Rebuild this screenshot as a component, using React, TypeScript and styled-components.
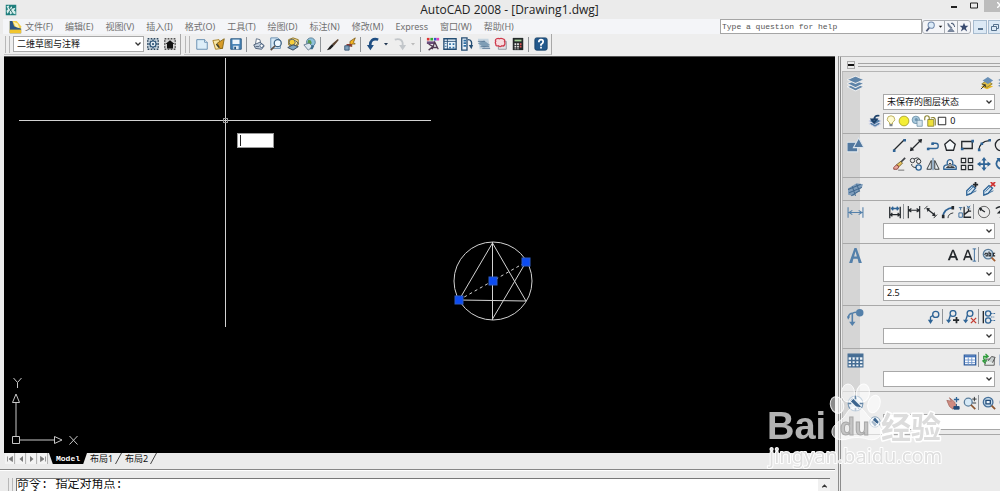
import React from 'react';
import styled, { createGlobalStyle, css } from 'styled-components';

const sans = '"Noto Sans", "Open Sans", "Noto Sans CJK SC", sans-serif';
const mono = '"Liberation Mono", "Noto Sans CJK SC", monospace';
const ink = '#24282c';
const blue = '#2f6496';
const gold = '#e8b928';

const Global = createGlobalStyle`
  *, *::before, *::after { box-sizing: border-box; }
  html, body, #root { height: 100%; }
  body { margin: 0; background: #ebebeb; color: #111; font: 9px/12px ${sans}; overflow: hidden; }
  button, input, select { font: inherit; color: inherit; margin: 0; padding: 0; border: 0; border-radius: 0; background: none; }
  svg { display: block; flex: none; }
`;

/* ---------- icons ---------- */

const glyphs: Record<string, React.ReactNode> = {
  app: <><path d="M1 1h14v14H1z" fill="#1f7f7d" /><path d="M2 3l3-1 1 4 3-3 1 3 4-1-2 4 2 1v4l-4-2-3 2-1-4-3 3-1-4 2-2z" fill="#d6efec" /><path d="M5 4l5 8M11 4l-6 7" stroke="#155" /></>,
  doc: <><path d="M2 1h8l5 6v8H2z" fill="#f3cf48" /><path d="M2 1l3 0 2 6 8 3v5H2z" fill="#2b5584" /><path d="M2 11h13v4H2z" fill="#f1c52e" /><path d="M6 2l3 6 4 1-2-5z" fill="#fff3b5" /></>,
  gear: <><path d="M0 0h16v16H0z" fill="#c9d6e0" /><path d="M1 1h14v14H1z" fill="none" stroke="#33485c" strokeWidth="2" strokeDasharray="2 2" /><path d="M8 2v12M2 8h12M4 4l8 8M12 4l-8 8" stroke="#33597b" strokeWidth="2" /><circle cx="8" cy="8" r="4" fill="#e5eef5" stroke="#33597b" strokeWidth="1.500" /><circle cx="8" cy="8" r="1.500" fill="#33597b" /></>,
  home: <><path d="M0 0h16v16H0z" fill="#d2d2d2" /><path d="M1 1h14v14H1z" fill="none" stroke="#555" strokeWidth="2" strokeDasharray="2 2" /><path d="M2 8l6-5 6 5h-2v6H4V8z" fill="#111" /></>,
  page: <><path d="M2 3h9l3 3v8H2z" fill="#dcedf8" stroke="#5c87ab" /><path d="M11 3v3h3" fill="#fff" stroke="#5c87ab" /></>,
  open: <><path d="M1 4l7-1 4 10-8 1z" fill="#f8e6a4" stroke="#a37a1b" /><path d="M6 7l8-5-2 11-3 0z" fill="#d79b28" stroke="#7f6216" /><path d="M5 8l3 4" stroke="#3a3a2a" strokeWidth="1.500" /></>,
  save: <><path d="M2 2h12v12H2z" fill="#4b86b8" stroke="#23527b" /><path d="M4 3h8v5H4z" fill="#eef6fb" /><path d="M5 10h6v4H5z" fill="#dfe9f1" /><path d="M6 11h2v3H6z" fill="#23527b" /></>,
  print: <><path d="M4 8l1-6 4 1 1 4" fill="#fff" stroke="#56687e" /><path d="M2 9l7-3 5 4-3 4-7-1z" fill="#c3d0df" stroke="#44566f" /><circle cx="11" cy="10" r="2" fill="#fff" stroke="#3f5878" /><path d="M4 11h4" stroke="#44566f" /></>,
  preview: <><path d="M2 1h8l3 3v9H2z" fill="#d6e8f5" stroke="#5c87ab" /><circle cx="10" cy="7" r="4" fill="#eef8ff" stroke="#3d6385" strokeWidth="1.5" /><path d="M7 10l-5 5" stroke="#5d5148" strokeWidth="2" /></>,
  publish: <><path d="M3 3l5-2 6 2 0 6-5 3-6-3z" fill="#f9e08a" stroke="#8a6b18" /><circle cx="7" cy="6" r="3.500" fill="#f8ce39" stroke="#4a5a6c" /><path d="M2 12l6-3 6 2-6 4z" fill="#7fa4c2" stroke="#345" /><path d="M11 4l3 3-3 3" fill="none" stroke="#345" /></>,
  globe: <><circle cx="9" cy="6" r="5" fill="#8fc1dc" stroke="#557a93" /><path d="M6 3l3 1 1 3-3 3-2-3z" fill="#59974f" /><path d="M1 9l6-2 4 4-5 4z" fill="#dce6ee" stroke="#62798e" /><path d="M10 9l3 1-2 4-3 0z" fill="#3d6e8f" /></>,
  brush: <><path d="M14 3L8 8l1 1z" fill="#70513b" stroke="#5b4330" strokeWidth="1.500" /><path d="M7 8l2 2-4 4-4 1 3-4z" fill="#1a1a1a" /></>,
  match: <><path d="M14 1L8 5l0 4 2 2 0-3 4 0-2-2z" fill="#f6b420" stroke="#84621b" /><path d="M4 8h6v3H4z" fill="#8a3b34" /><path d="M2 10h5v5H2z" fill="#7ea0bd" stroke="#35546f" /></>,
  undo: <><path d="M14 3C8 1 4 4 5 11" fill="none" stroke="#1f4e82" strokeWidth="3" /><path d="M1 9h8l-4 6z" fill="#1f4e82" /></>,
  redo: <><path d="M2 3c6-2 10 1 9 7" fill="none" stroke="#c2c6ca" strokeWidth="2" /><path d="M7 9h8l-4 6z" fill="#c2c6ca" /></>,
  palette: <><path d="M1 1h3v3H1z" fill="#d33" /><path d="M5 1h3v3H5z" fill="#3a3" /><path d="M9 1h3v3H9z" fill="#35c" /><path d="M12 1h3v3h-3z" fill="#d4b" /><path d="M1 5h9v3H1z" fill="#6a4b7a" /><path d="M3 8l5 3-5 4M7 14l3-8 4 8M8 12h5" fill="none" stroke="#503b52" strokeWidth="1.5" /></>,
  dcenter: <><path d="M1 2h14v12H1z" fill="#e9f3fa" stroke="#244d73" strokeWidth="1.5" /><path d="M5 2v12M1 5h14" stroke="#244d73" /><path d="M7 7h2v2H7zM11 7h2v2h-2zM7 11h2v2H7zM11 11h2v2h-2zM2 7h2v1H2zM2 10h2v1H2z" fill="#2e6fa3" /></>,
  tpalette: <><path d="M2 1h6v14H2z" fill="#e8f1f8" stroke="#244d73" strokeWidth="1.5" /><path d="M4 4h3M4 7h3M4 10h3" stroke="#2e6fa3" strokeWidth="2" /><path d="M9 3c4 0 5 3 4 7" fill="none" stroke="#244d73" strokeWidth="1.5" /><path d="M10 9h5l-2 5z" fill="#244d73" /></>,
  sheets: <><path d="M1 2h12l2 12H3z" fill="#c6d5e0" /><path d="M1 7l7-3 7 5-7 3z" fill="#7e9db5" /><path d="M1 5h8M4 11h10M6 13h9" stroke="#5b7c97" /></>,
  markup: <><path d="M5 5h9v9H5z" fill="#e2e2e6" stroke="#8b8f98" /><path d="M3 2q2-1 3 0 2-1 4 0 3 1 2 3 1 2 0 4-1 2-3 1-2 2-4 0-3 1-3-2-1-2 0-3-1-2 1-3z" fill="#f6dcdf" stroke="#cf3b4d" strokeWidth="1.5" /></>,
  calc: <><path d="M2 1h12v14H2z" fill="#24292a" /><path d="M4 3h8v2H4z" fill="#a7d39a" /><path d="M4 7h2v2H4zM7 7h2v2H7zM4 10h2v2H4zM7 10h2v2H7zM4 13h2v1H4zM7 13h2v1H7z" fill="#e8e8e8" /><path d="M10 7h2v2h-2zM10 10h2v2h-2z" fill="#d55" /></>,
  help: <><rect x="1" y="1" width="14" height="14" rx="2" fill="#23598c" stroke="#163f66" /><path d="M5.500 6q0-3 2.500-3t2.500 2.500Q10.500 7 8 8.500V10" fill="none" stroke="#fff" strokeWidth="2" /><path d="M7 11h2v2H7z" fill="#fff" /></>,
  layers: <><path d="M0 11l8-3 8 3-8 4z" fill="#5f84a8" stroke="#eee" /><path d="M0 8l8-3 8 3-8 4z" fill="#5f84a8" stroke="#eee" /><path d="M0 4.500L8 1l8 3.500L8 8z" fill="#5f84a8" stroke="#eee" /></>,
  shapes: <><path d="M0 5h10v9H0z" fill="#52789f" stroke="#dde5ec" /><path d="M11 1l5 9H6z" fill="#52789f" stroke="#dde5ec" /></>,
  hatch: <><path d="M1 7l8-5 6 1-1 3-8 8-5-1z" fill="#7f9dbb" /><path d="M1 8l12-5M2 11l12-5M4 14l8-5M5 5l3 9M9 3l3 7" stroke="#42698f" /></>,
  dimension: <path d="M1 3v10M15 3v10M2 8h12M5 6L2 8l3 2M11 6l3 2-3 2" fill="none" stroke="#5480aa" />,
  letterBlue: <path d="M2 15L7 1h2l5 14h-3l-1-4H6l-1 4zM6.700 9h2.600L8 4z" fill="#5480aa" fillRule="evenodd" />,
  leaderBig: <><path d="M5 14V5q0-2 4-2M1 8q1-4 4-4" fill="none" stroke="#5480aa" strokeWidth="1.500" /><path d="M2 12h6l-3 4zM0 7l3 0-2 3z" fill="#5480aa" /><circle cx="12" cy="3.500" r="3.500" fill="#5480aa" /></>,
  tableBig: <><path d="M1 2h14v12H1z" fill="#f0f5f9" stroke="#456d94" /><path d="M1 2h14v3H1z" fill="#456d94" /><path d="M1 8h14M1 11h14M4.500 5v9M8 5v9M11.500 5v9" stroke="#456d94" strokeWidth="1.500" /></>,
  compass: <><circle cx="8" cy="8" r="7" fill="#eaf0f5" stroke="#7c9ab6" /><path d="M4 4l8 8" stroke="#3b648e" strokeWidth="3" /><path d="M8 1v3M8 12v3M1 8h3M12 8h3" stroke="#6384a4" strokeWidth="1.500" /></>,
  layerGold: <><path d="M1 12l7-3 7 3-7 3z" fill={gold} /><path d="M2 9l6-4 6 4-6 4z" fill="#dfbe44" stroke="#8b7c35" /><path d="M3 5l6-4 6 4-6 4z" fill="#688fb6" /><path d="M1 15l5-5M3 10h3v3" fill="none" stroke={ink} /></>,
  layerPrev: <><path d="M1 11l7-3 7 3-7 4z" fill="#557fa8" stroke="#dde" /><path d="M1 8l7-4 7 4-7 4z" fill="#557fa8" stroke="#dde" /><path d="M13 2Q7 1 7 7M4 6h6l-3 4z" fill="none" stroke="#1d4169" strokeWidth="2" /></>,
  bulb: <><path d="M8 1Q3 1 3 6q0 2 3 4v2h4v-2q3-2 3-4 0-5-5-5z" fill="#fffbd0" stroke="#a99b3c" /><path d="M6 12h4v3H6z" fill="#7b8289" /></>,
  sun: <><circle cx="8" cy="8" r="6.500" fill="#f4ee35" stroke="#99931f" /></>,
  vpfreeze: <><circle cx="6.500" cy="6.500" r="5" fill="#a9c9dd" stroke="#5d859e" /><path d="M8 7h7v8H8z" fill="#d6e5ee" stroke="#6a8ca4" /><circle cx="7" cy="6" r="2" fill="#6d95b0" /></>,
  unlock: <><path d="M1 7V4q0-3 3-3t3 3v5" fill="none" stroke="#8b8431" strokeWidth="1.500" /><path d="M5 6h8v9H5z" fill="#eee03a" stroke="#7a742b" /><path d="M9 4q5-2 6 2v8" fill="none" stroke="#8b8431" strokeWidth="1.500" /></>,
  swatch: <path d="M2 2h12v12H2z" fill="#fff" stroke="#222" strokeWidth="1.500" />,
  line: <><path d="M2 14L14 2" stroke={ink} strokeWidth="1.500" /><path d="M1 13h3v3H1zM13 1h3v3h-3z" fill={blue} /></>,
  xline: <><path d="M2 14L14 2" stroke={ink} strokeWidth="1.500" /><path d="M1 15l1-5 4 4zM15 1l-1 5-4-4z" fill={ink} /></>,
  pline: <><path d="M2 12h9q3 0 3-3t-3-3H7" fill="none" stroke={blue} strokeWidth="1.500" /><path d="M1 11h3v3H1zM6 5h3v3H6z" fill={blue} /></>,
  polygon: <path d="M8 2l6 5-2 7H4L2 7z" fill="#f5f8fa" stroke={ink} strokeWidth="1.500" />,
  rect: <><path d="M2 4h12v8H2z" fill="none" stroke={ink} strokeWidth="1.500" /><path d="M1 11h3v3H1zM13 2h3v3h-3z" fill={blue} /></>,
  arc: <><path d="M2 14Q3 4 14 3" fill="none" stroke={ink} strokeWidth="1.500" /><path d="M1 12h3v3H1zM4 5h3v3H4zM13 1h3v3h-3z" fill={blue} /></>,
  circle: <><circle cx="8" cy="8" r="6.500" fill="none" stroke={ink} strokeWidth="1.500" /><path d="M7 7h3v3H7z" fill={blue} /></>,
  erase: <><path d="M15 1L10 6" stroke="#3d4045" strokeWidth="2" /><path d="M10 5l2 2-4 4-3-2z" fill="#e8c25a" stroke="#6b5a2a" /><path d="M5 9l3 2-2 3-4 0 0-2z" fill="#e9a79b" stroke="#883a32" /><path d="M7 15h7" stroke="#666" /></>,
  copy: <><circle cx="4" cy="4" r="2.500" fill="none" stroke={ink} /><circle cx="11" cy="5" r="2.500" fill="none" stroke={ink} /><circle cx="11" cy="12" r="3" fill="#e4eef6" stroke={blue} strokeWidth="1.500" /><path d="M3 8q0 4 5 4M6 2q4-2 6 0" fill="none" stroke={ink} /></>,
  mirror: <><path d="M6 4v10H1zM10 4v10h5z" fill="#eaf0f4" stroke={ink} /><path d="M8 1v14" stroke={blue} /></>,
  offset: <><path d="M1 14q-1-5 4-5-1-6 3-6t3 6q5 0 4 5z" fill="none" stroke={blue} strokeWidth="1.500" /><path d="M4 12q0-1 3-1-1-4 1-4t1 4q4 0 4 1z" fill="none" stroke={ink} /></>,
  array: <path d="M1.500 1.500h5v5h-5zM9.500 1.500h5v5h-5zM1.500 9.500h5v5h-5zM9.500 9.500h5v5h-5z" fill="none" stroke={ink} strokeWidth="1.300" />,
  move: <path d="M8 0l3 4H9v3h3V5l4 3-4 3V9H9v3h2l-3 4-3-4h2V9H4v2L0 8l4-3v2h3V4H5z" fill={blue} />,
  rotate: <><path d="M5 3Q1 7 4 11t9 2" fill="none" stroke={blue} strokeWidth="2" /><path d="M3 1l6 0-3 5z" fill={blue} /></>,
  blockAdd: <><path d="M2 10l6-6 4 3-5 6-5 2z" fill="#d8e7f2" stroke={blue} strokeWidth="1.500" /><path d="M4 11l6-6M3 15l10-5" stroke={blue} /><path d="M12 0v6M9 3h6" stroke={ink} strokeWidth="2" /></>,
  blockDel: <><path d="M2 10l6-6 4 3-5 6-5 2z" fill="#d8e7f2" stroke={blue} strokeWidth="1.500" /><path d="M4 11l6-6M3 15l10-5" stroke={blue} /><path d="M10 0l5 5M15 0l-5 5" stroke="#d03232" strokeWidth="2" /></>,
  dimEdit: <><path d="M2 2v13M14 2v13M3 11h10M5 9l-2 2 2 2M11 9l2 2-2 2" fill="none" stroke={ink} strokeWidth="1.500" /><path d="M4 4h8M6 2L4 4l2 2M10 2l2 2-2 2" fill="none" stroke={blue} strokeWidth="1.500" /></>,
  dimLinear: <path d="M1.500 1v14M14.500 1v14M2 6h12M5 4L2 6l3 2M11 4l3 2-3 2" fill="none" stroke={ink} strokeWidth="1.300" />,
  dimAligned: <><path d="M3 4l10 8" stroke={ink} strokeWidth="1.500" /><path d="M0 5l4-4M11 15l4-4" stroke={ink} /><path d="M3 3l4 1-3 4zM13 13l-4-1 3-4z" fill={ink} /></>,
  dimArc: <><path d="M2 14Q3 4 14 3" fill="none" stroke={blue} strokeWidth="2" /><path d="M8 15q0-5 6-6" fill="none" stroke={ink} /><path d="M1 11h3v4H1zM12 1h3v4h-3z" fill={ink} /></>,
  dimOrd: <><path d="M7 2v12h8M7 11l5-4M12 4v3h3" fill="none" stroke={ink} strokeWidth="1.500" /><path d="M1 3h4M3 3v3M1 9h4v5H1zM10 1l4 3M14 1l-4 3" fill="none" stroke={blue} /></>,
  dimRadius: <><circle cx="8" cy="8" r="6.500" fill="none" stroke="#555" /><path d="M3 4l6 4" stroke={ink} strokeWidth="1.500" /><path d="M2 3l4 0-2 4z" fill={ink} /></>,
  dimJog: <path d="M2 4q6-4 8 0l-5 5h6l-4 6" fill="none" stroke={ink} strokeWidth="1.500" />,
  letter: <path d="M2 14L7 2h2l5 12h-2.500l-1-3h-5l-1 3zM6.200 9h3.600L8 4z" fill={ink} fillRule="evenodd" />,
  letterI: <><path d="M0 14L4.500 2h2L11 14H9l-1-3H3l-1 3zM3.600 9h3.800L5.500 4z" fill={ink} fillRule="evenodd" /><path d="M11 1h4M13 1v14M11 15h4" stroke={blue} fill="none" /></>,
  find: <><circle cx="7" cy="7" r="5.500" fill="#d7e4ee" stroke="#5a7d9b" strokeWidth="1.500" /><path d="M3 8l1-2h2v3H4M8 4v5h2V6H8M15 6h-2v3h2" fill="none" stroke={ink} strokeWidth="1.300" /><path d="M11 11l4 4" stroke="#a45e31" strokeWidth="2" /></>,
  leader: <><circle cx="10" cy="5" r="3.500" fill="none" stroke={blue} strokeWidth="1.500" /><path d="M7 6L4 8v5" fill="none" stroke={blue} strokeWidth="1.500" /><path d="M1 11h6l-3 5z" fill={blue} /></>,
  leaderAdd: <><circle cx="8" cy="4" r="3.300" fill="none" stroke={blue} strokeWidth="1.500" /><path d="M5 6l-2 6" fill="none" stroke={blue} strokeWidth="1.500" /><path d="M0 11h6l-3 4z" fill={blue} /><path d="M12 8v7M8 11.500h7" stroke={ink} strokeWidth="2" /></>,
  leaderDel: <><circle cx="8" cy="4" r="3.300" fill="none" stroke={blue} strokeWidth="1.500" /><path d="M5 6l-2 6" fill="none" stroke={blue} strokeWidth="1.500" /><path d="M0 11h6l-3 4z" fill={blue} /><path d="M9 9l6 6M15 9l-6 6" stroke="#c33b31" strokeWidth="1.500" /></>,
  leaderAlign: <><path d="M1.500 1v14" stroke={ink} strokeWidth="1.500" /><circle cx="7" cy="4" r="3" fill="none" stroke={blue} strokeWidth="1.500" /><circle cx="7" cy="12" r="3" fill="none" stroke={blue} strokeWidth="1.500" /><path d="M10 4h5M10 8h4M10 12h5" stroke={blue} strokeDasharray="2 1" /></>,
  table: <><path d="M1.500 2.500h13v11h-13z" fill="#fff" stroke="#315fa0" strokeWidth="1.500" /><path d="M2 3h12v2H2z" fill="#4676bd" /><path d="M2 8h12M2 11h12M6 5v8M10 5v8" stroke="#6c94cc" /></>,
  link: <><path d="M5 7h9v7H3z" fill="#e6ebe9" stroke="#555" /><path d="M7 9l4-5 4 1-3 6" fill="#c9cfcf" stroke="#444" /><path d="M2 7V4h4M4 1l3 3-3 2M6 9H2M4 7l-3 2 3 3" fill="none" stroke="#2f9c3b" strokeWidth="1.500" /></>,
  pan: <><path d="M1 5l5 1-2-4 6 5 1 4-3 4-4-3z" fill="#cf8b80" stroke="#a96f66" /><path d="M12 1v6M9 4h6" stroke={blue} strokeWidth="1.500" /><path d="M9 12h6v3H9zM12 9v4" fill="#234c78" stroke="#234c78" /></>,
  zoom: <><circle cx="6" cy="7" r="4.500" fill="#d6e9f6" stroke="#5b7e9c" strokeWidth="1.500" /><path d="M9 10l5 5" stroke="#8c562f" strokeWidth="2" /><path d="M13 1v5M10.500 3.500h5M11 8h4" stroke={ink} /></>,
  zoomWin: <><circle cx="7" cy="7" r="5.500" fill="#c5dbec" stroke="#46709a" strokeWidth="1.500" /><path d="M4.500 5h5v4h-5z" fill="#e8f2fa" stroke="#234c78" strokeWidth="1.500" /><path d="M11 11l4 4" stroke="#8c562f" strokeWidth="2" /></>,
  diamond: <><circle cx="8" cy="8" r="7" fill="#eef4f8" stroke="#7f9ab1" /><path d="M8 2l5 6-5 6-5-6z" fill="#3b648e" /></>,
  search: <><circle cx="9" cy="6" r="4.500" fill="#dcebf8" stroke="#6f87aa" strokeWidth="1.500" /><path d="M6 10l-4 5" stroke="#4d5978" strokeWidth="2.500" /></>,
  comm: <><path d="M3 2l7 8M3 2q0 7 6 7M8 10l-5 5h10z" fill="#8190a8" stroke="#43546f" /><path d="M8 2q5 0 6 6M10 1l3 4" fill="none" stroke="#43546f" strokeWidth="1.500" /></>,
  star: <path d="M8 1l2 5h5l-4 3.500 2 5.500-5-3.500L3 15l2-5.500L1 6h5z" fill="#394b70" />,
  first: <path d="M3 3v10M13 3v10L6 8z" fill="#777" stroke="#777" strokeWidth="1.500" />,
  prev: <path d="M12 2v12L5 8z" fill="#777" />,
  next: <path d="M4 2v12l7-6z" fill="#777" />,
  last: <path d="M13 3v10M3 3v10l7-5z" fill="#777" stroke="#777" strokeWidth="1.500" />,
  caret: <path d="M4 6h8l-4 5z" fill="currentColor" />,
  up: <path d="M3 10l5-5 5 5" fill="none" stroke="#333" strokeWidth="3" />,
  down: <path d="M3 5l5 5 5-5" fill="none" stroke="#333" strokeWidth="2.500" />,
};

const Icon = ({ name, size = 14 }: { name: string; size?: number }) => (
  <svg width={size} height={size} viewBox="0 0 16 16" aria-hidden="true">{glyphs[name]}</svg>
);

/* ---------- shared controls ---------- */

const IconButton = styled.button<{ $w?: number; $dim?: boolean }>`
  flex: none;
  width: ${p => p.$w ?? 17}px;
  height: 17px;
  display: flex;
  align-items: center;
  justify-content: center;
  color: ${p => (p.$dim ? '#bbb' : '#1f3550')};
`;

const Rule = styled.span<{ $tight?: boolean }>`
  flex: none;
  width: 1px;
  height: 15px;
  margin: ${p => (p.$tight ? '0 1px 0 0' : '0 3px 0 2px')};
  background: #909498;
`;

const SelectBox = styled.div<{ $w: number }>`
  position: relative;
  flex: none;
  width: ${p => p.$w}px;
  height: 16px;
  svg { position: absolute; right: 2px; top: 4px; pointer-events: none; }
`;

const Select = styled.select`
  appearance: none;
  display: block;
  width: 100%;
  height: 100%;
  padding: 0 4px 0 3px;
  border: 1px solid #a8a8a8;
  background: #fff;
  line-height: 12px;
`;

const Dropdown = ({ label, options = [''], width = 112 }: { label: string; options?: string[]; width?: number }) => (
  <SelectBox $w={width}>
    <Select aria-label={label}>{options.map(o => <option key={o}>{o}</option>)}</Select>
    <Icon name="down" size={8} />
  </SelectBox>
);

const Tools = ({ names }: { names: string[] }) => (
  <>
    {names.map((n, i) => (n === '|'
      ? <Rule key={i} $tight />
      : <IconButton key={i} aria-label={n}><Icon name={n} /></IconButton>))}
  </>
);

/* ---------- frame ---------- */

const Page = styled.div`
  display: flex;
  flex-direction: column;
  height: 100vh;
  overflow: hidden;
  background: #ebebeb;
`;

const TitleBar = styled.header`
  position: relative;
  flex: none;
  height: 19px;
  display: flex;
  align-items: center;
  justify-content: space-between;
  padding-left: 5px;
`;

const Title = styled.h1`
  margin: 0;
  padding-left: 58px;
  font: 400 12px/18px "Open Sans", sans-serif;
  color: #222;
`;

const WindowButtons = styled.div`
  display: flex;
  align-self: stretch;
  width: 56px;
  overflow: hidden;
`;

const WindowButton = styled.button<{ $close?: boolean }>`
  flex: none;
  width: 20px;
  height: 12px;
  padding-top: 2px;
  display: flex;
  justify-content: center;
  ${p => p.$close && css`width: 32px; background: #bcbcbc;`}
`;

const MenuBar = styled.nav`
  flex: none;
  height: 15px;
  margin-left: 3px;
  padding-left: 5px;
  display: flex;
  align-items: center;
  background: #f4f5f8;
  overflow: hidden;
`;

const MenuList = styled.div`
  flex: 1;
  display: flex;
  gap: 12px;
  margin-left: 3px;
  white-space: nowrap;
`;

const MenuItem = styled.button`
  color: #707070;
  line-height: 14px;
`;

const HelpInput = styled.input`
  width: 202px;
  height: 15px;
  padding-left: 1px;
  border: 1px solid #a5a5a5;
  background: #fff;
  font: 8px/12px ${mono};
  &::placeholder { color: #555; opacity: 1; }
`;

const HelpGroup = styled.div`
  flex: none;
  display: flex;
  align-items: center;
  height: 14px;
  margin-right: 2px;
  border: 1px solid #a9adb3;
  border-radius: 3px;
`;

const HelpButton = styled.button<{ $w: number; $line?: boolean }>`
  width: ${p => p.$w}px;
  height: 12px;
  display: flex;
  align-items: center;
  justify-content: center;
  border-left: ${p => (p.$line ? '1px solid #a9adb3' : '0')};
`;

const ChildButtons = styled.div`
  flex: none;
  width: 27px;
  display: flex;
  gap: 1px;
  overflow: hidden;
`;

const ChildButton = styled.button`
  flex: none;
  width: 14px;
  height: 14px;
  display: flex;
  align-items: center;
  justify-content: center;
  border: 1px solid #a8bccf;
  background: #dce9f5;
`;

const ToolRow = styled.div`
  flex: none;
  height: 22px;
  padding-left: 4px;
  display: flex;
  gap: 3px;
  background: #eee;
`;

const ToolGroup = styled.div`
  display: flex;
  align-items: center;
  height: 21px;
  padding-right: 2px;
  border-right: 1px solid #a8a8a8;
  border-bottom: 1px solid #c4c4c4;
`;

const Grip = styled.span<{ $h?: number }>`
  flex: none;
  width: 5px;
  height: ${p => p.$h ?? 18}px;
  margin: 0 3px 0 1px;
  border: solid #b8b8b8;
  border-width: 0 1px;
`;

const Workspace = styled.div`
  flex: 1;
  min-height: 0;
  display: flex;
`;

const MainColumn = styled.main`
  flex: 1;
  min-width: 0;
  display: flex;
  flex-direction: column;
`;

/* ---------- drawing ---------- */

const Drawing = styled.section`
  position: relative;
  flex: 1;
  min-height: 0;
  margin-left: 4px;
  border-top: 1px solid #555;
  background: #000;
  overflow: hidden;
`;

const Sheet = styled.svg`
  position: absolute;
  left: 0;
  top: 0;
`;

const UcsMark = styled.svg`
  position: absolute;
  left: 6px;
  bottom: 6px;
`;

const Prompt = styled.label`
  position: absolute;
  left: 233px;
  top: 76px;
  width: 37px;
  height: 15px;
  border: 1px solid #999;
  background: #fff;
  &::after { content: ''; position: absolute; left: 2px; top: 1px; width: 1px; height: 11px; background: #222; }
  input { display: block; width: 100%; height: 100%; padding-left: 4px; }
`;

const grips = [[459, 300], [493, 281], [526, 262]];

const DrawingArea = () => (
  <Drawing>
    <Sheet width="600" height="340" viewBox="4 57 600 340" fill="none" stroke="#d2d2d2">
      <g shapeRendering="crispEdges">
        <path d="M19 120.500H431M225.500 58V327" />
        <path d="M223.500 118.500h4v4h-4z" stroke="#999" />
      </g>
      <circle cx="493" cy="281" r="39" />
      <path d="M492.500 242v78M492.500 243L459 300L526 301L492.500 243M492.500 319L526 262" />
      <path d="M459 300L526 262" strokeDasharray="3 3" />
      {grips.map(([x, y]) => <rect key={x} x={x - 4} y={y - 4} width="8" height="8" fill="#0d4cf2" stroke="#2c5bc4" />)}
    </Sheet>
    <UcsMark width="70" height="72" viewBox="10 375 70 72" fill="none" stroke="#c8c8c8">
      <path d="M12.500 436.500h7v7h-7zM16 436V402M20 440H54M12.500 402.500L16 394L19.500 402.500zM54.500 436.500L62 440L54.500 443.500z" />
      <path d="M13.500 378l4 4.500 4-4.500M17.500 382.500V388M69.500 436l8 8.500M77.500 436l-8 8.500" />
    </UcsMark>
    <Prompt><input type="text" aria-label="Dynamic input" /></Prompt>
  </Drawing>
);

/* ---------- tabs and command line ---------- */

const TabBar = styled.div`
  flex: none;
  height: 17px;
  padding-left: 5px;
  display: flex;
  align-items: flex-start;
  border-bottom: 1px solid #858585;
`;

const NavButton = styled.button`
  width: 10px;
  height: 11px;
  margin-right: 1px;
  display: flex;
  align-items: center;
  justify-content: center;
  border-right: 1px solid #b5b5b5;
  background: #f3f3f3;
`;

const Tab = styled.button<{ $on?: boolean }>`
  width: 35px;
  height: 11px;
  padding-left: 3px;
  display: flex;
  justify-content: space-between;
  line-height: 11px;
  white-space: nowrap;
  ${p => p.$on && css`
    width: 38px;
    justify-content: center;
    padding-left: 0;
    font: bold 8px/11px ${mono};
    color: #fff;
    background: #000;
    clip-path: polygon(0 0, 100% 0, 90% 100%, 10% 100%);
  `}
`;

const Slash = () => (
  <svg width="7" height="11" viewBox="0 0 7 11" aria-hidden="true"><path d="M6.500 0L.5 11" stroke="#444" /></svg>
);

const CommandBar = styled.div`
  flex: none;
  height: 21px;
  padding: 7px 5px 0 7px;
  display: flex;
  border-top: 1px solid #fff;
`;

const CommandBox = styled.div`
  flex: 1;
  display: flex;
  border: solid #777;
  border-width: 1px 0 0 1px;
  background: #fff;
  overflow: hidden;
`;

const CommandLog = styled.div`
  flex: 1;
  height: 13px;
  font: 12px/12px ${mono};
  color: #111;
  white-space: pre;
  overflow: hidden;
`;

const ScrollUp = styled.button`
  width: 12px;
  height: 14px;
  display: flex;
  align-items: center;
  justify-content: center;
  background: #f0f0f0;
`;

/* ---------- dashboard ---------- */

const Dashboard = styled.aside`
  flex: none;
  width: 165px;
  padding-left: 3px;
  display: flex;
  overflow: hidden;
`;

const Panels = styled.div`
  flex: 1;
  min-width: 0;
  padding-left: 1px;
  border-left: 3px double #8c8c8c;
  border-top: 1px solid #b5b5b5;
  overflow: hidden;
`;

const PanelHead = styled.div`
  display: flex;
  align-items: center;
  gap: 3px;
  height: 15px;
  padding: 2px 0 0 5px;
  border-bottom: 1px solid #b5b5b5;
`;

const Collapse = styled.button`
  width: 8px;
  height: 8px;
  display: flex;
  align-items: center;
  justify-content: center;
  border: 1px solid #aaa;
`;

const HeadLines = styled.span`
  flex: 1;
  height: 4px;
  border: solid #a5a5a5;
  border-width: 1px 0;
`;

const Section = styled.section<{ $h: number }>`
  height: ${p => p.$h}px;
  display: grid;
  grid-template-columns: 24px 136px;
  border-bottom: 1px solid #a9a9a9;
  border-left: 1px solid #bbb;
  background: linear-gradient(90deg, #d5d5d5 17px, #ebebeb 17px);
`;

const Badge = styled.div`
  display: flex;
  justify-content: center;
  padding-top: 3px;
`;

const Rows = styled.div`
  display: flex;
  flex-direction: column;
  gap: 2px;
  padding-top: 2px;
`;

const Row = styled.div<{ $end?: number }>`
  display: flex;
  align-items: center;
  height: 17px;
  padding-left: ${p => (p.$end === undefined ? '16px' : '0')};
  justify-content: ${p => (p.$end === undefined ? 'flex-start' : 'flex-end')};
  margin-right: ${p => -(p.$end ?? 0)}px;
`;

const LeadRow = styled(Row)`
  padding-left: 0;
`;

const Field = styled.input`
  width: 136px;
  height: 16px;
  padding-left: 3px;
  border: 1px solid #a8a8a8;
  background: #fff;
`;

const LayerField = styled.div`
  flex: 1;
  height: 16px;
  display: flex;
  align-items: center;
  gap: 1px;
  padding-left: 1px;
  border: 1px solid #a8a8a8;
  background: #fff;
`;

const Panel = ({ h, badge, children }: { h: number; badge: string; children: React.ReactNode }) => (
  <Section $h={h}>
    <Badge><Icon name={badge} size={17} /></Badge>
    <Rows>{children}</Rows>
  </Section>
);

const DashboardPalette = () => (
  <Dashboard>
    <Panels>
      <PanelHead>
        <Collapse aria-label="Collapse"><svg width="6" height="2"><path d="M0 0h6v2H0z" fill="#111" /></svg></Collapse>
        <HeadLines />
      </PanelHead>
      <Panel h={62} badge="layers">
        <Row $end={9}><Tools names={['layerGold', 'layers']} /></Row>
        <Row><Dropdown label="Layer state" options={['未保存的图层状态']} /></Row>
        <LeadRow>
          <IconButton $w={16} aria-label="Previous layer"><Icon name="layerPrev" /></IconButton>
          <LayerField>
            <Icon name="bulb" size={12} /><Icon name="sun" size={12} /><Icon name="vpfreeze" size={12} />
            <Icon name="unlock" size={12} /><Icon name="swatch" size={10} /><span>&nbsp;0</span>
          </LayerField>
        </LeadRow>
      </Panel>
      <Panel h={44} badge="shapes">
        <Row $end={6}><Tools names={['line', 'xline', 'pline', 'polygon', 'rect', 'arc', 'circle']} /></Row>
        <Row $end={6}><Tools names={['erase', 'copy', 'mirror', 'offset', 'array', 'move', 'rotate']} /></Row>
      </Panel>
      <Panel h={23} badge="hatch">
        <Row $end={11}><Tools names={['blockAdd', 'blockDel', 'blockAdd']} /></Row>
      </Panel>
      <Panel h={43} badge="dimension">
        <Row $end={6}><Tools names={['dimEdit', '|', 'dimLinear', 'dimAligned', 'dimArc', 'dimOrd', '|', 'dimRadius', 'dimJog']} /></Row>
        <Row><Dropdown label="Dimension style" /></Row>
      </Panel>
      <Panel h={62} badge="letterBlue">
        <Row $end={11}><Tools names={['letter', 'letterI', '|', 'find', 'letter']} /></Row>
        <Row><Dropdown label="Text style" /></Row>
        <Row><Field aria-label="Text height" defaultValue="2.5" /></Row>
      </Panel>
      <Panel h={43} badge="leaderBig">
        <Row $end={11}><Tools names={['leader', '|', 'leaderAdd', 'leaderDel', '|', 'leaderAlign', 'leader']} /></Row>
        <Row><Dropdown label="Leader style" /></Row>
      </Panel>
      <Panel h={43} badge="tableBig">
        <Row $end={11}><Tools names={['table', '|', 'link', 'table']} /></Row>
        <Row><Dropdown label="Table style" /></Row>
      </Panel>
      <Panel h={43} badge="compass">
        <Row $end={11}><Tools names={['pan', 'zoom', '|', 'zoomWin', 'zoomWin']} /></Row>
        <LeadRow>
          <IconButton $w={16} aria-label="View"><Icon name="diamond" size={12} /></IconButton>
          <Field aria-label="View name" />
        </LeadRow>
      </Panel>
    </Panels>
  </Dashboard>
);

/* ---------- watermark ---------- */

const Watermark = styled.svg`
  position: fixed;
  right: 50px;
  bottom: 17px;
  pointer-events: none;
`;

const BaiduMark = () => (
  <Watermark width="190" height="96" viewBox="760 378 190 96">
    <g fill="#fff" fillOpacity="0.55" stroke="#fff" strokeOpacity="0.85">
      <ellipse cx="837" cy="405" rx="6.500" ry="8.500" transform="rotate(-20 837 405)" />
      <ellipse cx="848" cy="393" rx="6.500" ry="9" />
      <ellipse cx="863" cy="393" rx="6.500" ry="9" transform="rotate(8 863 393)" />
      <ellipse cx="874" cy="404" rx="6" ry="9" transform="rotate(18 874 404)" />
      <path d="M856 407c8 0 9 7 15 12s11 8 10 14-8 8-14 6-14-2-20 0-14 0-15-6 5-10 10-14 6-12 14-12z" />
    </g>
    <g fontFamily='"Liberation Sans", sans-serif' fontWeight="700">
      <text x="767" y="439" fontSize="38" fill="#fff" fillOpacity="0.7">Bai</text>
      <text x="840" y="435" fontSize="24" fill="#c4c4c4" stroke="#a8a8a8">du</text>
    </g>
    <g stroke="#fff" paintOrder="stroke" strokeLinejoin="round">
      <text x="881" y="438" fontSize="30" strokeWidth="3" fill="#dcdcdc" fontWeight="700" fontFamily='"Noto Sans CJK SC", sans-serif'>经验</text>
      <text x="769" y="463" fontSize="20" strokeWidth="2" fill="#dedede" fontFamily='"Noto Sans", sans-serif'>jingyan.baidu.com</text>
    </g>
  </Watermark>
);

/* ---------- app ---------- */

const menus = ['文件(F)', '编辑(E)', '视图(V)', '插入(I)', '格式(O)', '工具(T)', '绘图(D)', '标注(N)', '修改(M)', 'Express', '窗口(W)', '帮助(H)'];
const standard = ['page', 'open', 'save', '|', 'print', 'preview', 'publish', 'globe', '|', 'brush', 'match', '|', 'undo', 'caret', 'redo', 'caretDim', '|', 'palette', 'dcenter', 'tpalette', 'sheets', 'markup', 'calc', '|', 'help'];

export default function App() {
  return (
    <Page>
      <Global />
      <TitleBar>
        <Icon name="app" size={12} />
        <Title>AutoCAD 2008 - [Drawing1.dwg]</Title>
        <WindowButtons>
          <WindowButton aria-label="Minimize"><svg width="8" height="8"><path d="M1 4h6v2H1z" fill="#222" /></svg></WindowButton>
          <WindowButton aria-label="Maximize"><svg width="8" height="7"><path d="M.5 1h7v5h-7z" fill="none" stroke="#222" /></svg></WindowButton>
          <WindowButton $close aria-label="Close"><svg width="6" height="6"><path d="M0 0l6 6M6 0L0 6" stroke="#fff" strokeWidth="1.500" /></svg></WindowButton>
        </WindowButtons>
      </TitleBar>
      <MenuBar>
        <Icon name="doc" />
        <MenuList>{menus.map(m => <MenuItem key={m}>{m}</MenuItem>)}</MenuList>
        <HelpInput aria-label="Help" placeholder="Type a question for help" />
        <HelpGroup>
          <HelpButton $w={14} aria-label="Search"><Icon name="search" size={11} /></HelpButton>
          <HelpButton $w={7} aria-label="Search options"><Icon name="caret" size={7} /></HelpButton>
          <HelpButton $w={13} $line aria-label="Communication center"><Icon name="comm" size={10} /></HelpButton>
          <HelpButton $w={13} $line aria-label="Favorites"><Icon name="star" size={10} /></HelpButton>
        </HelpGroup>
        <ChildButtons>
          <ChildButton aria-label="Minimize drawing"><svg width="6" height="8"><path d="M1 5h5v2H1z" fill="#54708c" /></svg></ChildButton>
          <ChildButton aria-label="Restore drawing"><svg width="8" height="8"><path d="M2.500 3V1.500h5v4H6M.5 3.500h5v4h-5z" fill="none" stroke="#54708c" /></svg></ChildButton>
        </ChildButtons>
      </MenuBar>
      <ToolRow>
        <ToolGroup>
          <Grip $h={17} />
          <Dropdown label="Workspace" options={['二维草图与注释']} width={131} />
          <IconButton aria-label="Workspace settings"><Icon name="gear" size={12} /></IconButton>
          <IconButton aria-label="My workspace"><Icon name="home" size={12} /></IconButton>
        </ToolGroup>
        <ToolGroup>
          <Grip $h={17} />
          {standard.map((n, i) => {
            if (n === '|') return <Rule key={i} />;
            if (n.startsWith('caret')) return <IconButton key={i} $w={10} $dim={n !== 'caret'} aria-label="More"><Icon name="caret" size={8} /></IconButton>;
            return <IconButton key={i} aria-label={n}><Icon name={n} /></IconButton>;
          })}
        </ToolGroup>
      </ToolRow>
      <Workspace>
        <MainColumn>
          <DrawingArea />
          <TabBar>
            {['first', 'prev', 'next', 'last'].map(n => <NavButton key={n} aria-label={n}><Icon name={n} size={8} /></NavButton>)}
            <Tab $on>Model</Tab>
            <Tab>布局1<Slash /></Tab>
            <Tab>布局2<Slash /></Tab>
          </TabBar>
          <CommandBar>
            <Grip $h={13} />
            <CommandBox>
              <CommandLog>{'命令: 指定对角点:\n命令:'}</CommandLog>
              <ScrollUp aria-label="Scroll up"><Icon name="up" size={7} /></ScrollUp>
            </CommandBox>
          </CommandBar>
        </MainColumn>
        <DashboardPalette />
      </Workspace>
      <BaiduMark />
    </Page>
  );
}
